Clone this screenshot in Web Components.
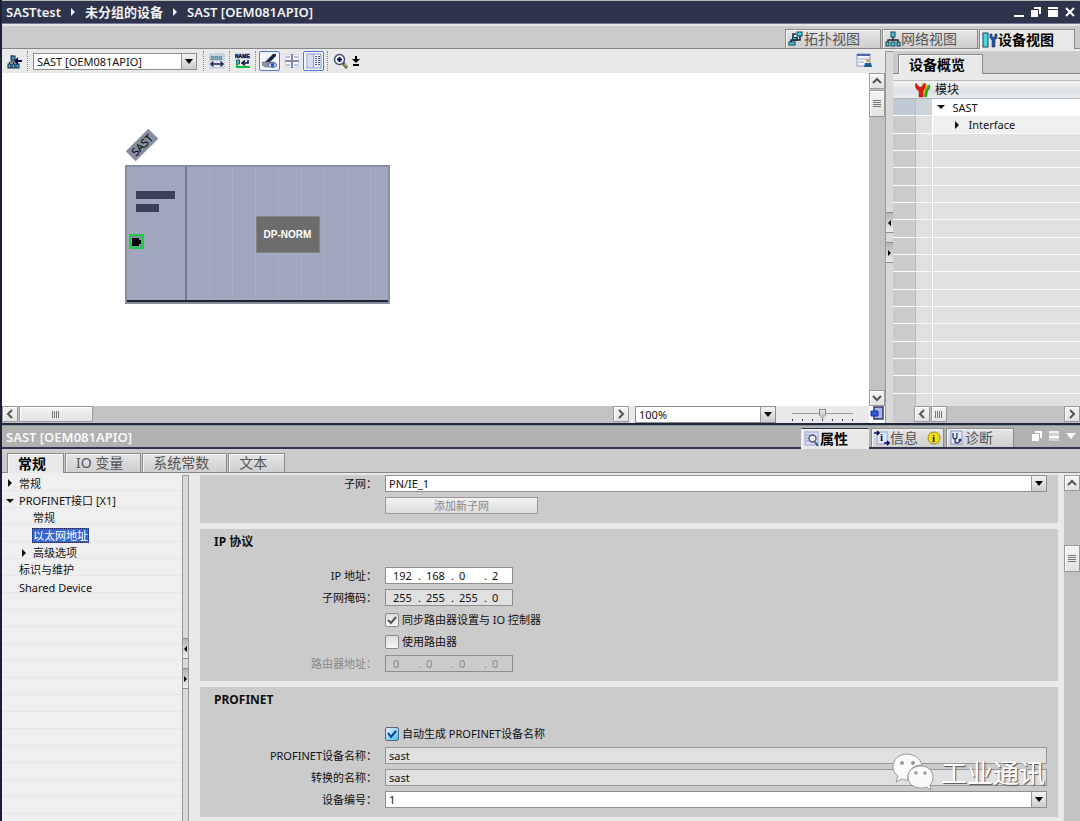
<!DOCTYPE html>
<html lang="zh-CN">
<head>
<meta charset="utf-8">
<meta name="viewport" content="width=device-width, initial-scale=1">
<title>SASTtest</title>
<style>
html,body{margin:0;height:100%}
body{font:11px/16px "Noto Sans","Noto Sans CJK SC",sans-serif;color:#111;background:#e9e9e9;overflow:hidden}
</style>
</head>
<body>
<portal-app></portal-app>
<script>
const BASE = `*{box-sizing:border-box}
button,input,select{font:inherit;color:inherit;margin:0;padding:0;border:0;background:none;border-radius:0;outline:0}
:host([hidden]){display:none}`;

function define(name, css, html) {
  const control = name === 'drop-down';
  customElements.define(name, class extends HTMLElement {
    static formAssociated = control;
    constructor() {
      super();
      this.attachShadow({ mode: 'open', delegatesFocus: control });
    }
    connectedCallback() {
      const t = document.createElement('template');
      t.innerHTML = `<style>${BASE}${css}</style>` + (typeof html === 'function' ? html(this) : html);
      this.shadowRoot.replaceChildren(t.content.cloneNode(true));
    }
  });
}

/* ---------- icons ---------- */
const ICONS = {
  insert: [16, 16, `<path d="M5 2v7M2 9h9M2.500 9v3M6.500 9v3M10.500 9v3" stroke="#234" fill="none"/><rect x="4" y="3" width="4" height="4" fill="#3aa0b0" stroke="#124"/><rect x="1" y="11" width="3" height="4" fill="#4bc" stroke="#124"/><rect x="5" y="11" width="3" height="4" fill="#4bc" stroke="#124"/><rect x="9" y="11" width="3" height="4" fill="#4bc" stroke="#124"/><path d="M7 8l4-4v3h4v2h-4v3z" fill="#0a0a50"/>`],
  width: [16, 16, `<rect x="1" y="1" width="14" height="14" fill="#e6eaf6" stroke="#b4bcd8"/><path d="M2 3h3v4H2zM6 3h3v4H6zM10 3h3v4h-3z" fill="#6fb6c4" stroke="#51708a" stroke-width=".6"/><path d="M2 11h12M4.500 8.500L2 11l2.500 2.500M11.500 8.500L14 11l-2.500 2.500" stroke="#1d2350" fill="none" stroke-width="1.400"/>`],
  rename: [16, 16, `<text x="0" y="5" font-size="5" font-weight="900" fill="#111150" stroke="#111150" stroke-width=".4" font-family="Liberation Sans,sans-serif">NAME</text><path d="M1.500 7h3v4h-3z" fill="#48b8c8" stroke="#356"/><path d="M13 7v3H8M10 7.500L7 10l3 2.500" stroke="#111150" fill="none" stroke-width="1.600"/><path d="M2 10v4h13" stroke="#12b83c" stroke-width="2" fill="none"/>`],
  show: [16, 16, `<path d="M3 9L11 1h3v2L8 9z" fill="#1d2544"/><path d="M0 9h10l4 1v4H3l-3-2z" fill="#8d96a8" stroke="#6a7080" stroke-width=".6"/><path d="M6 12q4-5 9 0-4.500 5-9 0z" fill="#fff" stroke="#37518a" stroke-width=".8"/><circle cx="10.500" cy="12" r="2" fill="#1b53c8"/>`],
  grid: [16, 16, `<rect x="1" y="1" width="14" height="14" fill="#cfd5f2"/><path d="M2 2h5v5H2zM9 2h5v5H9zM2 9h5v5H2zM9 9h5v5H9z" fill="#f6f7ff"/><path d="M8 1v14M1 8h6M9 8h6" stroke="#333b60" fill="none"/><path d="M2 4h4M10 4h4M2 12h4M10 12h4" stroke="#8089b4"/>`],
  list: [16, 16, `<rect x="1" y="1" width="14" height="14" fill="#f2f4ff" stroke="#8b98cc"/><path d="M2 2h5v12H2z" fill="#d6dcf4"/><path d="M7.500 1v14" stroke="#8a96c6"/><path d="M9 3h2v1H9zM12 3h2v1h-2zM9 5h2v1H9zM12 5h2v1h-2zM9 7h2v1H9zM12 7h2v1h-2zM9 9h2v1H9zM12 9h2v1h-2zM9 11h2v1H9zM12 11h2v1h-2z" fill="#4a5488"/>`],
  zoom: [16, 16, `<path d="M10 10l4 5" stroke="#3d5878" stroke-width="3"/><path d="M11 11l3 3" stroke="#e0a030" stroke-width="1.500"/><circle cx="6.500" cy="6.500" r="5" fill="#f3f6ff" stroke="#49526c" stroke-width="1.500"/><path d="M6.500 4v5M4 6.500h5" stroke="#0a0a60" stroke-width="2"/>`],
  fit: [8, 12, `<path d="M4 1v6" stroke="#000" stroke-width="2"/><path d="M0 4h8L4 8z"/><path d="M1 10h6" stroke="#000" stroke-width="2"/>`],
  panel: [16, 16, `<rect x="1" y="1" width="13" height="12" fill="#f5f7ff" stroke="#8c97c4"/><path d="M1 1h13v2H1z" fill="#5465ac"/><path d="M2 6h9M2 9h6" stroke="#9aa6cc"/><circle cx="12" cy="7.500" r="2" fill="#d9a35e"/><path d="M9 10h6l1 4H8z" fill="#1c5c9a"/>`],
  topo: [16, 16, `<path d="M8 3H5v4M12 5v4H9M3 11V9h2" stroke="#1c2a40" stroke-width="1.600" fill="none"/><rect x="9" y="1" width="5" height="4" fill="#35dbe6" stroke="#1c3a50"/><path d="M4 6h6v4H4z" fill="#1c3a50"/><path d="M5 7h3v1H5z" fill="#35dbe6"/><rect x="1" y="11" width="6" height="3" fill="#35dbe6" stroke="#1c3a50"/>`],
  net: [16, 16, `<path d="M8 5v5M3 11V9h10v2" stroke="#223" fill="none" stroke-width="1.400"/><rect x="6" y="1" width="4" height="5" fill="#35cbe0" stroke="#245"/><rect x="1" y="11" width="3" height="4" fill="#35cbe0" stroke="#245"/><rect x="6" y="11" width="4" height="4" fill="#35cbe0" stroke="#245"/><rect x="12" y="11" width="3" height="4" fill="#35cbe0" stroke="#245"/>`],
  dev: [16, 16, `<rect x="1" y="1" width="5" height="14" fill="#41dce8" stroke="#245"/><path d="M8 2v4l2 2v7h3V8l2-2V2h-2v3h-3V2z" fill="#2455a4" stroke="#163468" stroke-width=".6"/>`],
  tools: [16, 16, `<path d="M10 1l3 3 1-2q3 3-1 7l-1 6H9V7z" fill="#35a32a"/><path d="M7 1l3 3 1-2q3 3-1 6l-1 7H6V7z" fill="#f2d423"/><path d="M1 1q-2 5 3 8v6h4V9q4-4 1-8L7 5H4z" fill="#e01b12" stroke="#a11" stroke-width=".5"/>`],
  props: [16, 16, `<rect x="1" y="1" width="13" height="13" fill="#dbe2fb" stroke="#94a2d8"/><path d="M2 4h4M2 7h3M2 10h3" stroke="#8393cf"/><path d="M11 11l3 4" stroke="#35589a" stroke-width="2"/><circle cx="8.500" cy="7.500" r="3.500" fill="#eef" stroke="#556" stroke-width="1.400"/>`],
  info: [16, 16, `<rect x="3" y="2" width="10" height="12" fill="#dfe5fa" stroke="#9aa6d0"/><path d="M0 3h5M3 1l2 2-2 2M10 13h5M13 11l2 2-2 2" stroke="#101060" stroke-width="1.600" fill="none"/><text x="6" y="11" font-size="11" font-weight="700" fill="#101050" font-family="Liberation Serif,serif">i</text>`],
  warn: [14, 14, `<circle cx="7" cy="7" r="6" fill="#f4de12" stroke="#a38c10"/><text x="5" y="11" font-size="11" font-weight="700" fill="#222" font-family="Liberation Serif,serif">i</text>`],
  diag: [16, 16, `<rect x="2" y="1" width="11" height="13" fill="#e6eafc" stroke="#8594cc"/><path d="M4 3v3q0 3 2 3t2-3V3M6 9v2q0 2 2 2t3-2" stroke="#223a66" stroke-width="1.300" fill="none"/><circle cx="11" cy="10" r="1.500" fill="#223a66"/>`],
  overview: [16, 16, `<rect x="5" y="1" width="9" height="12" fill="#a9b5e6" stroke="#26306c" stroke-width="1.400"/><path d="M2 5h7v5H2z" fill="#3158e8" stroke="#1c2e90"/>`],
  min: [10, 10, `<path d="M0 8h10v2H0z" fill="#fff"/>`],
  restore: [10, 10, `<path d="M3 0h7v7H8V2H3z" fill="#fff"/><path d="M0 3h7v7H0z" fill="#fff"/>`],
  max: [10, 10, `<path d="M0 0h10v2H0zM0 3h10v7H0z" fill="#fff"/>`],
  close: [10, 10, `<path d="M1 1l8 8M9 1l-8 8" stroke="#fff" stroke-width="2"/>`],
  half: [10, 10, `<path d="M0 0h10v10H0z" fill="#d4d4d4"/><path d="M0 0h10v2H0z" fill="#eee"/><path d="M0 5h10v2H0z" fill="#fff"/>`],
  drop: [10, 10, `<path d="M0 2h10L5 8z" fill="#fff"/>`],
  right: [8, 10, `<path d="M2 1l4 4-4 4z" fill="currentColor"/>`],
  down: [8, 10, `<path d="M0 3h8L4 7z" fill="currentColor"/>`],
  chat: [42, 38, `<path d="M15 1C7 1 1 6 1 14c0 4 2 7 5 9l-2 6 6-3c2 1 4 1 6 1-1-9 5-15 14-15C28 5 22 1 15 1z" fill="#fafafa" stroke="#999"/><path d="M29 13c-7 0-13 4-13 11s6 11 13 11c2 0 4 0 5-1l5 3-1-5c2-2 3-4 3-8 0-6-5-11-12-11z" fill="#fafafa" stroke="#999"/><circle cx="10" cy="10" r="2" fill="#999"/><circle cx="21" cy="10" r="2" fill="#999"/><circle cx="24" cy="20" r="1.700" fill="#999"/><circle cx="33" cy="20" r="1.700" fill="#999"/>`]
};
define('ui-icon', `:host{display:inline-flex;flex:none}svg{display:block}`, el => {
  const [w, h, body] = ICONS[el.getAttribute('name')];
  return `<svg width="${w}" height="${h}" viewBox="0 0 ${w} ${h}" aria-hidden="true">${body}</svg>`;
});

/* ---------- title bar ---------- */
define('title-bar', `
:host{display:flex;align-items:center;height:26px;background:linear-gradient(#bbb 0 1px,#2d344c 1px 23px,#77799a 23px 24px,#e6e6e6 24px);padding:0 5px 2px 4px;color:#f2f2f2;font-size:13px;line-height:20px;font-weight:600}
nav{display:flex;align-items:center;gap:8px;flex:1}
a{color:inherit;text-decoration:none}
.w{display:flex;gap:7px}button{display:flex}`,
`<nav aria-label="路径"><a href="#project">SASTtest</a><ui-icon name="right"></ui-icon><a href="#devices">未分组的设备</a><ui-icon name="right"></ui-icon><a href="#sast">SAST [OEM081APIO]</a></nav>
<div class="w"><button aria-label="最小化"><ui-icon name="min"></ui-icon></button><button aria-label="还原"><ui-icon name="restore"></ui-icon></button><button aria-label="最大化"><ui-icon name="max"></ui-icon></button><button aria-label="关闭"><ui-icon name="close"></ui-icon></button></div>`);

/* ---------- tabs ---------- */
define('tab-strip', `:host{display:flex;align-items:flex-end;gap:1px;height:23px;background:#cbcbcb;box-shadow:inset 0 -1px #868686}`, `<slot></slot>`);
define('tab-item', `
:host{display:flex;padding-bottom:1px}
button{display:flex;align-items:center;height:19px;padding:0 17px 0 10px;font-size:14px;line-height:18px;color:#555;background:linear-gradient(#e6e6e6,#dadada 50%,#cfcfcf);border:1px solid #8c8c8c;border-bottom:0;box-shadow:inset 1px 1px #f4f4f4;white-space:nowrap}
:host([icon]) button{padding:0 20px 0 2px}
:host([badge]) button{padding-right:2px}
.b{margin-left:9px;display:flex}
:host([active]){padding:0}
:host([active]) button{height:20px;background:#e9e9e9;color:#000;font-weight:700}
:host([dark][active]) button{border-color:#2d344c #e9e9e9;height:21px}`,
el => `<button role="tab" aria-selected="${el.hasAttribute('active')}">${el.hasAttribute('icon') ? `<ui-icon name="${el.getAttribute('icon')}"></ui-icon>` : ''}<slot></slot>${el.hasAttribute('badge') ? '<span class="b"><ui-icon name="warn"></ui-icon></span>' : ''}</button>`);

/* ---------- scroll bar and splitter ---------- */
define('scroll-bar', `
:host{display:flex;background:#c2c2c2;height:17px;flex:1;min-width:0}
:host([vertical]){flex-direction:column;width:16px;height:auto;flex:none}
button,i{flex:none;width:16px;height:16px;border:1px solid #999;background:linear-gradient(#f4f4f4,#e2e2e2);box-shadow:inset 1px 1px #fff;display:flex;align-items:center;justify-content:center}
i{width:var(--thumb,74px);margin-left:var(--lead,1px)}
:host([vertical]) i{width:16px;height:27px;margin:var(--lead,1px) 0 0}
i::before{content:"";width:8px;height:7px;background:repeating-linear-gradient(90deg,#777 0 1px,transparent 1px 2px)}
:host([vertical]) i::before{background:repeating-linear-gradient(#777 0 1px,transparent 1px 2px)}
.e{margin-left:auto}:host([vertical]) .e{margin:auto 0 0}
:host([open-end]) .e{display:none}`,
el => {
  const v = el.hasAttribute('vertical');
  const arrow = d => `<svg width="10" height="10" viewBox="0 0 10 10"><path d="${d}" fill="none" stroke="#555" stroke-width="2"/></svg>`;
  return `<button aria-label="${v ? '向上' : '向左'}">${arrow(v ? 'M1 7l4-4 4 4' : 'M7 1L3 5l4 4')}</button><i></i><button class="e" aria-label="${v ? '向下' : '向右'}">${arrow(v ? 'M1 3l4 4 4-4' : 'M3 1l4 4-4 4')}</button>`;
});
define('split-bar', `
:host{display:flex;flex-direction:column;width:8px;background:#d9d9d9;border-left:1px solid #999;border-top:1px solid #999;gap:9px}
:host::before{content:"";flex:var(--before,1)}:host::after{content:"";flex:var(--after,1)}
button{height:21px;border:solid #8c8c8c;border-width:1px 0;background:linear-gradient(#b4b4b4,#eee);display:flex;align-items:center;justify-content:center}`,
`<button aria-label="收起左侧"><svg width="5" height="6"><path d="M4 0v6L1 3z"/></svg></button><button aria-label="收起右侧"><svg width="5" height="6"><path d="M1 0v6l3-3z"/></svg></button>`);

/* ---------- drop-down ---------- */
define('drop-down', `
:host{display:grid;min-width:0;height:17px}
select{grid-area:1/1;appearance:none;width:100%;height:100%;padding:0 20px 0 3px;background:#fff;border:1px solid #8e8e8e;line-height:15px}
span{grid-area:1/1;justify-self:end;width:15px;margin:1px;border-left:1px solid #999;background:linear-gradient(#f4f4f4,#ccc);display:flex;align-items:center;justify-content:center;pointer-events:none}`,
el => `<select aria-label="${el.getAttribute('label')}"><option>${el.getAttribute('value')}</option></select><span><svg width="8" height="5"><path d="M0 0h8L4 5z"/></svg></span>`);

/* ---------- editor toolbar ---------- */
define('editor-toolbar', `
:host{display:flex;align-items:center;height:24px;padding:0 12px 0 3px;background:#e9e9e9;gap:2px}
button{display:flex;align-items:center;justify-content:center;height:20px;min-width:19px}
button.on{width:21px;border:1px solid #4d7bd6;background:#f4f7ff;border-radius:2px}
hr{width:0;height:20px;margin:0 1px;border:0;border-left:1px dotted #888}
drop-down{width:164px;margin:0 3px 0 2px}
button.f{min-width:8px}.end{margin-left:auto}`,
`<button aria-label="插入"><ui-icon name="insert"></ui-icon></button><hr><drop-down label="设备" value="SAST [OEM081APIO]"></drop-down><hr>
<button aria-label="显示宽度"><ui-icon name="width"></ui-icon></button><hr><button aria-label="名称"><ui-icon name="rename"></ui-icon></button><hr>
<button class="on" aria-label="显示标签"><ui-icon name="show"></ui-icon></button><button aria-label="分页"><ui-icon name="grid"></ui-icon></button><button class="on" aria-label="表格"><ui-icon name="list"></ui-icon></button><hr>
<button aria-label="放大"><ui-icon name="zoom"></ui-icon></button><button class="f" aria-label="缩放选项"><ui-icon name="fit"></ui-icon></button>
<button class="end" aria-label="面板"><ui-icon name="panel"></ui-icon></button>`);

/* ---------- device on the canvas ---------- */
define('device-rack', `
:host{position:absolute;left:123px;top:92px;width:265px;height:139px;display:grid;grid-template-columns:60px 1fr;background:#a2a7c0;border:2px solid #878ea0;box-shadow:inset 0 -2px #1f2230}
.tag{position:absolute;left:-1px;top:-29px;width:32px;height:14px;line-height:14px;text-align:center;background:#878e9f;color:#000;transform:rotate(-45deg)}
.head{border-right:2px solid #747b92;padding:24px 9px 0;margin-bottom:2px}
.head b{display:block;height:8px;width:39px;background:#3a4356;margin-bottom:5px}
.head b+b{width:23px}
.port{width:15px;height:15px;border:2px solid #16cf3c;margin:22px 0 0 -7px;background:#878ea0;display:flex}
.slots{display:grid;place-items:center;padding-top:2px;background:repeating-linear-gradient(90deg,transparent 0 22px,#acb0b8 22px 23px);margin-bottom:2px}
.norm{background:#6d6d6d;border:1px solid #858585;color:#fff;font:700 10px/36px "Liberation Sans",sans-serif;width:64px;height:37px;text-align:center}`,
`<span class="tag">SAST</span><div class="head"><b></b><b></b><div class="port"><svg width="11" height="11"><path d="M1 2h7v2h2v4H8v2H1z"/></svg></div></div><div class="slots"><div class="norm">DP-NORM</div></div>`);

define('zoom-slider', `
:host{display:flex;width:61px;height:16px;background:repeating-linear-gradient(90deg,#333 0 1px,transparent 1px 10px) 0 13px/100% 2px no-repeat,linear-gradient(#999,#999) 0 7px/100% 1px no-repeat}
input{appearance:none;width:100%;height:16px}
input::-webkit-slider-thumb{appearance:none;width:7px;height:11px;background:linear-gradient(#eee,#aaa);border:1px solid #888;clip-path:polygon(0 0,100% 0,100% 60%,50% 100%,0 60%)}`,
`<input type="range" aria-label="缩放" value="50">`);

define('device-editor', `
:host{display:grid;grid-template-columns:minmax(0,1fr) 16px;grid-template-rows:24px minmax(0,1fr) 17px;background:#e9e9e9;min-height:0}
editor-toolbar{grid-column:1/-1}
.canvas{position:relative;background:#fff;overflow:hidden}
.foot{display:flex;gap:6px}
.foot drop-down{width:141px}
zoom-slider{margin:0 16px 0 10px}
button{display:flex;background:#fff}`,
`<editor-toolbar></editor-toolbar><div class="canvas"><device-rack></device-rack></div><scroll-bar vertical></scroll-bar>
<div class="foot"><scroll-bar></scroll-bar><drop-down label="缩放比例" value="100%"></drop-down><zoom-slider></zoom-slider></div><button aria-label="总览"><ui-icon name="overview"></ui-icon></button>`);

/* ---------- device overview ---------- */
define('device-overview', `
:host{display:grid;grid-template-rows:23px minmax(0,1fr) 17px;background:#e9e9e9;min-height:0}
tab-strip{padding-left:5px;margin-top:2px;height:23px}
.t{overflow:hidden;padding-top:8px}
table{width:100%;border-collapse:collapse;table-layout:fixed}
col.a{width:22px}col.b{width:17px}
th,td{padding:0;height:17px;line-height:15px;text-align:left;font-weight:400}
th{background:linear-gradient(#f2f2f2,#dbe0e5 60%,#eee);border-bottom:1px solid #aab8c4;border-top:1px solid #bbb;height:18px;font-size:12px}
th:last-child{padding-left:3px}
tbody tr:nth-child(3n+2) td{height:18px}
tbody td{border-bottom:1px solid #fbfbfb;background:#e0e0e0}
td:first-child{background:#cbcbcb;border-right:1px solid #bbb}
td:nth-child(2){border-right:1px solid #fff}
tr.s td{background:#fff}tr.s td:first-child{background:#c0cad6}tr.s td:nth-child(2){background:#cfd4d8}
tr.i td:last-child{background:#efefef}
td span{display:flex;align-items:center;gap:8px;padding-left:4px}
tr.i span{padding-left:20px}
th ui-icon{display:flex}
.f{display:flex;padding-left:21px;background:linear-gradient(90deg,#cbcbcb 21px,#e9e9e9 21px)}
scroll-bar{--thumb:16px}`,
() => `<tab-strip><tab-item active>设备概览</tab-item></tab-strip><div class="t"><table><colgroup><col class="a"><col class="b"><col></colgroup>
<thead><tr><th></th><th><ui-icon name="tools"></ui-icon></th><th>模块</th></tr></thead><tbody>
<tr class="s"><td></td><td></td><td><span><ui-icon name="down"></ui-icon>SAST</span></td></tr><tr class="i"><td></td><td></td><td><span><ui-icon name="right"></ui-icon>Interface</span></td></tr>
${'<tr><td></td><td></td><td></td></tr>'.repeat(17)}</tbody></table></div><div class="f"><scroll-bar></scroll-bar></div>`);

/* ---------- inspector header ---------- */
define('inspector-head', `
:host{display:flex;align-items:flex-end;height:27px;padding:0 4px;background:linear-gradient(#1c2738 0 2px,#8b939c 2px 3px,#b1b1b1 3px 24px,#2d344c 24px 26px,#cbcbcb 26px)}
h1{flex:1;margin:0;font-size:13px;line-height:20px;font-weight:600;color:#f8f8f8;align-self:center}
.tabs{display:flex;gap:2px;align-items:flex-end;padding-bottom:1px}
.tabs tab-item{padding-bottom:2px}.tabs tab-item[active]{padding-bottom:0}
.w{display:flex;gap:7px;margin:0 0 9px 18px}button{display:flex}`,
`<h1>SAST [OEM081APIO]</h1><div class="tabs" role="tablist"><tab-item dark active icon="props">属性</tab-item><tab-item icon="info" badge>信息</tab-item><tab-item icon="diag">诊断</tab-item></div>
<div class="w"><button aria-label="浮动"><ui-icon name="restore"></ui-icon></button><button aria-label="平铺"><ui-icon name="half"></ui-icon></button><button aria-label="折叠"><ui-icon name="drop"></ui-icon></button></div>`);

/* ---------- navigation tree ---------- */
define('nav-tree', `
:host{display:block;min-height:0;overflow:hidden;padding-top:1px;background:repeating-linear-gradient(#efefef 0 16px,#e6e6e6 16px 17px) 0 1px}
ul{list-style:none;margin:0;padding:0}
li{height:17px;display:flex;align-items:center;gap:5px;padding-left:4px}
li:nth-child(3n+1){height:18px}
li.n{padding-left:17px}li.c{padding-left:30px}li.e{padding-left:18px}
a{color:inherit;text-decoration:none;line-height:15px;padding:0 1px;margin-left:-1px}
li.c a{margin-left:0}
a[aria-current]{background:#3366d4;color:#fff;outline:1px dotted #224;outline-offset:-1px}`,
`<ul><li><ui-icon name="right"></ui-icon><a href="#g">常规</a></li><li><ui-icon name="down"></ui-icon><a href="#x1">PROFINET接口 [X1]</a></li><li class="c"><a href="#x1g">常规</a></li><li class="c"><a href="#eth" aria-current="page">以太网地址</a></li><li class="e"><ui-icon name="right"></ui-icon><a href="#adv">高级选项</a></li><li class="n"><a href="#im">标识与维护</a></li><li class="n"><a href="#sd">Shared Device</a></li></ul>`);

/* ---------- form ---------- */
define('form-section', `
:host{display:grid;gap:5px;background:#cbcbcb;padding:0 11px 9px 0}
h2{margin:0;padding:5px 0 0 14px;height:33px;font-size:12px;line-height:16px;font-weight:700}`,
el => `${el.hasAttribute('heading') ? `<h2>${el.getAttribute('heading')}</h2>` : ''}<slot></slot>`);

define('form-row', `
:host{display:grid;grid-template-columns:177px minmax(0,1fr);column-gap:8px;height:17px;align-items:center}
:host([disabled]){color:#888}
.l{text-align:right;white-space:nowrap}
.v{grid-column:2}
input.t{width:100%;height:17px;border:1px solid #999;background:#e0e0e0;padding:0 3px;line-height:15px}
.v.b{width:153px;height:17px;border:1px solid #999;background:linear-gradient(#f2f2f2,#dcdcdc);color:#888;line-height:15px}
.ip{display:flex;width:128px;height:17px;border:1px solid #8e8e8e;background:#fff;padding-left:7px;line-height:15px}
:host([readonly]) .ip{background:#e0e0e0}:host([disabled]) .ip{background:#cbcbcb;color:#888}
.ip input{width:22px;height:15px;flex:none}.ip span{width:11px;flex:none;padding-left:3px}
.v.c{display:flex;align-items:center;gap:3px;white-space:nowrap}
.c input{appearance:none;width:14px;height:14px;border:1px solid #8a8a8a;border-radius:2px;background:linear-gradient(#ddd,#f8f8f8)}
.c input:checked{background:url("data:image/svg+xml,%3Csvg xmlns='http://www.w3.org/2000/svg' width='12' height='12'%3E%3Cpath d='M2 6l3 3 5-6' fill='none' stroke='%23555' stroke-width='2'/%3E%3C/svg%3E"),linear-gradient(#ddd,#f8f8f8)}
:host([accent]) .c input{border-color:#567;background:url("data:image/svg+xml,%3Csvg xmlns='http://www.w3.org/2000/svg' width='12' height='12'%3E%3Cpath d='M2 5l3 4 5-6' fill='none' stroke='%23103d92' stroke-width='2'/%3E%3C/svg%3E"),linear-gradient(135deg,#eef,#3cc0ee)}`,
el => {
  const kind = el.getAttribute('kind'), label = el.getAttribute('label') || '', value = el.getAttribute('value') || '';
  const dis = el.hasAttribute('disabled') ? 'disabled' : '';
  if (kind === 'button') return `<button class="v b" disabled>${value}</button>`;
  if (kind === 'check') return `<div class="v c"><input type="checkbox" id="f" ${el.hasAttribute('checked') ? 'checked' : ''}><label for="f">${label}</label></div>`;
  if (kind === 'select') return `<label class="l" for="f">${label}：</label><drop-down class="v" id="f" label="${label}" value="${value}"></drop-down>`;
  if (kind === 'ip') return `<label class="l" for="f">${label}：</label><div class="v ip">${value.split('.').map((o, i) => `<input ${i ? '' : 'id="f"'} aria-label="${label} ${i + 1}" value="${o}" ${dis}>`).join('<span>.</span>')}</div>`;
  return `<label class="l" for="f">${label}：</label><input class="v t" id="f" value="${value}" readonly>`;
});

define('settings-form', `:host{display:grid;align-content:start;gap:6px;padding:2px 6px 0 11px;background:#e9e9e9;min-height:0;overflow:hidden}`,
`<form-section><form-row kind="select" label="子网" value="PN/IE_1"></form-row><form-row kind="button" value="添加新子网"></form-row></form-section>
<form-section heading="IP 协议"><form-row kind="ip" label="IP 地址" value="192.168.0.2"></form-row><form-row kind="ip" readonly label="子网掩码" value="255.255.255.0"></form-row><form-row kind="check" checked label="同步路由器设置与 IO 控制器"></form-row><form-row kind="check" label="使用路由器"></form-row><form-row kind="ip" disabled label="路由器地址" value="0.0.0.0"></form-row></form-section>
<form-section heading="PROFINET"><form-row kind="check" accent checked label="自动生成 PROFINET设备名称"></form-row><form-row kind="text" label="PROFINET设备名称" value="sast"></form-row><form-row kind="text" label="转换的名称" value="sast"></form-row><form-row kind="select" label="设备编号" value="1"></form-row></form-section>`);

define('water-mark', `:host{position:absolute;right:35px;bottom:30px;display:flex;align-items:center;gap:7px;font:26px/38px "Noto Sans CJK SC",sans-serif;color:#fff;text-shadow:1px 1px 1px #555;pointer-events:none}`,
`<ui-icon name="chat"></ui-icon><span>工业通讯</span>`);

/* ---------- page ---------- */
define('portal-app', `
:host{position:relative;display:grid;grid-template-rows:minmax(0,423fr) minmax(0,398fr);height:100vh;border-left:2px solid #1c2035}
.up,.low{display:flex;flex-direction:column;min-height:0}
.views{padding-right:5px;justify-content:flex-end}
.work{flex:1;min-height:0;display:grid;grid-template-columns:minmax(0,883fr) 8px minmax(0,187fr)}
.work split-bar{margin-top:2px}
.pages{padding-left:5px}
.body{flex:1;min-height:0;display:grid;grid-template-columns:minmax(0,180fr) 7px minmax(0,875fr) 16px}
.body split-bar{width:7px;margin-top:2px;--before:163;--after:131;border-right:1px solid #999}
.body scroll-bar{margin-top:2px;--lead:54px}`,
`<section class="up"><title-bar></title-bar><tab-strip class="views"><tab-item icon="topo">拓扑视图</tab-item><tab-item icon="net">网络视图</tab-item><tab-item icon="dev" active>设备视图</tab-item></tab-strip>
<div class="work"><device-editor></device-editor><split-bar></split-bar><device-overview></device-overview></div></section>
<section class="low"><inspector-head></inspector-head><tab-strip class="pages"><tab-item active>常规</tab-item><tab-item>IO 变量</tab-item><tab-item>系统常数</tab-item><tab-item>文本</tab-item></tab-strip>
<div class="body"><nav-tree></nav-tree><split-bar></split-bar><settings-form></settings-form><scroll-bar vertical open-end></scroll-bar></div></section><water-mark></water-mark>`);
</script>
</body>
</html>
